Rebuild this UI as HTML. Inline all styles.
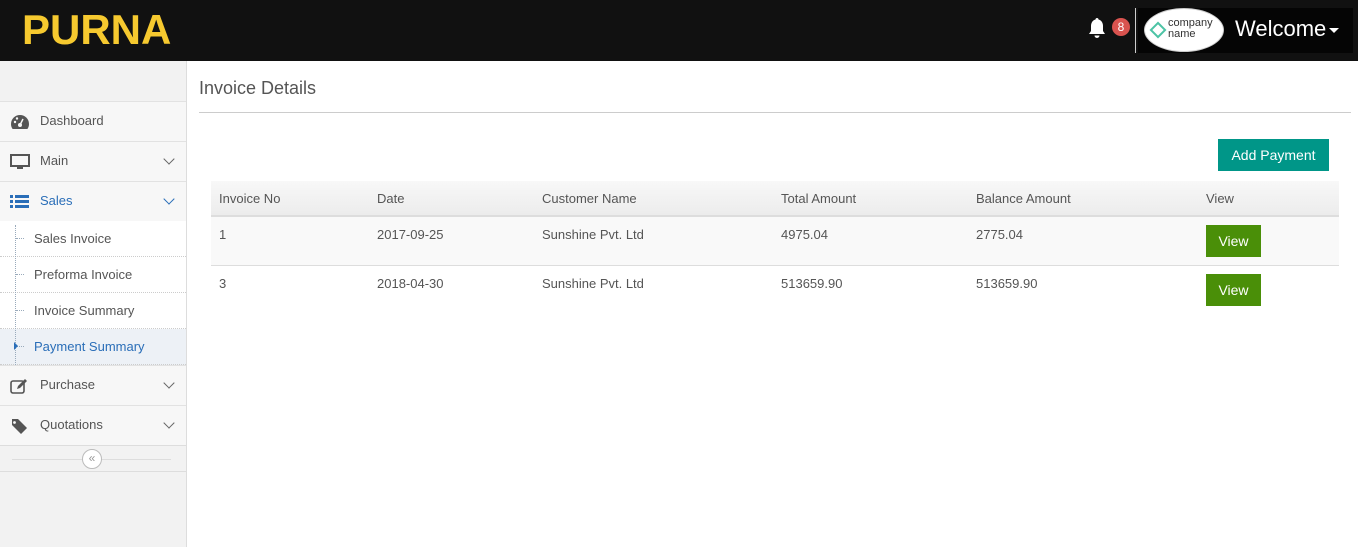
<!DOCTYPE html>
<html><head><style>
*{box-sizing:border-box;margin:0;padding:0}
body{width:1358px;height:558px;overflow:hidden;background:#fff;font-family:"Liberation Sans",sans-serif;font-size:13px;color:#555;position:relative}
.top{position:absolute;left:0;top:0;width:1358px;height:61px;background:#111}
.logo{position:absolute;left:22px;top:8px;font-family:"Liberation Sans",sans-serif;font-weight:bold;font-size:42px;color:#f6c92f;letter-spacing:0px;transform:scaleX(1.0);transform-origin:left;line-height:44px}
.side{position:absolute;left:0;top:61px;width:187px;height:486px;background:#f2f2f2;border-right:1px solid #ddd}
.it{position:absolute;left:0;width:186px;height:40px;border-top:1px solid #e2e2e2;background:#f7f7f7;color:#555;font-size:13px;line-height:38px;padding-left:40px}
.it .chev{position:absolute;right:13px;top:13px;width:8px;height:8px;border-right:1.5px solid #666;border-bottom:1.5px solid #666;transform:rotate(45deg)}
.sub{position:absolute;left:0;width:186px;height:36px;background:#fff;border-bottom:1px dotted #ccc;line-height:35px;padding-left:34px;color:#555;font-size:13px}
.sub:before{content:"";position:absolute;left:16px;top:17px;width:8px;border-top:1px dotted #9ab}
.ic{position:absolute;left:10px;top:12px}
.main h1{position:absolute;left:199px;top:78px;font-weight:normal;font-size:18px;color:#555}
.hr{position:absolute;left:199px;top:112px;width:1152px;border-top:1px solid #ccc}
.btn{position:absolute;background:#009688;color:#fff;font-size:14px;text-align:center}
.view{position:absolute;left:1206px;width:55px;height:32px;background:#4a8f08;color:#fff;font-size:14px;line-height:32px;text-align:center}
.thead{position:absolute;left:211px;top:181px;width:1128px;height:36px;background:linear-gradient(#f8f8f8,#ececec);border-bottom:2px solid #ddd}
.row{position:absolute;left:211px;width:1128px;height:49px;border-bottom:1px solid #ddd}
.c{position:absolute;font-size:13px;color:#555}
</style></head><body>
<div class="top">
<div class="logo">PURNA</div>
<svg style="position:absolute;left:1087px;top:17px" width="20" height="22" viewBox="0 0 20 22"><path d="M10 1c-1 0-1.5.7-1.5 1.5C5.5 3.3 4 6 4 9v5l-2 3h16l-2-3V9c0-3-1.5-5.7-4.5-6.5C11.5 1.7 11 1 10 1z M7.5 18.5a2.5 2.5 0 005 0z" fill="#fff"/></svg>
<div style="position:absolute;left:1112px;top:18px;width:18px;height:18px;border-radius:9px;background:#d9534f;color:#fff;font-size:12px;text-align:center;line-height:18px">8</div>
<div style="position:absolute;left:1135px;top:8px;width:1px;height:45px;background:#ccc"></div>
<div style="position:absolute;left:1138px;top:8px;width:215px;height:45px;background:#050505"></div>
<div style="position:absolute;left:1144px;top:8px;width:80px;height:44px;border-radius:50%;background:#fff;border:1px solid #ccc"></div>
<div style="position:absolute;left:1152px;top:24px;width:12px;height:12px;border:2.5px solid #4cc3a5;transform:rotate(45deg)"></div>
<div style="position:absolute;left:1168px;top:18px;font-size:11px;line-height:11px;color:#333">company<br>name</div>
<div style="position:absolute;left:1235px;top:16px;font-size:22px;color:#fff">Welcome</div>
<div style="position:absolute;left:1329px;top:28px;border-left:5px solid transparent;border-right:5px solid transparent;border-top:5px solid #fff"></div>
</div>
<div class="side">
<div class="it" style="top:40px">Dashboard<svg class="ic" width="20" height="16" viewBox="0 0 20 16"><path d="M10 1A9 9 0 001 10c0 2 .6 3.6 1.6 5h14.8c1-1.4 1.6-3 1.6-5a9 9 0 00-9-9z" fill="#555"/><circle cx="10" cy="11" r="2" fill="#f7f7f7"/><path d="M10 11l3-6" stroke="#f7f7f7" stroke-width="1.5"/><circle cx="5" cy="8" r="1.2" fill="#f7f7f7"/><circle cx="7" cy="4.5" r="1.2" fill="#f7f7f7"/></svg></div>
<div class="it" style="top:80px">Main<svg class="ic" width="20" height="16" viewBox="0 0 20 16"><rect x="1" y="1" width="18" height="11" fill="none" stroke="#555" stroke-width="2"/><rect x="7" y="13" width="6" height="2" fill="#555"/></svg><span class="chev"></span></div>
<div class="it" style="top:120px;color:#2a6eb8">Sales<svg class="ic" width="20" height="16" viewBox="0 0 20 16"><g fill="#2a6eb8"><rect x="0" y="1" width="3" height="3"/><rect x="5" y="1" width="14" height="3"/><rect x="0" y="6" width="3" height="3"/><rect x="5" y="6" width="14" height="3"/><rect x="0" y="11" width="3" height="3"/><rect x="5" y="11" width="14" height="3"/></g></svg><span class="chev" style="border-color:#2a6eb8"></span></div>
<div class="sub" style="top:160px">Sales Invoice</div>
<div class="sub" style="top:196px">Preforma Invoice</div>
<div class="sub" style="top:232px">Invoice Summary</div>
<div class="sub" style="top:268px;background:#edf1f6;color:#2a6eb8">Payment Summary</div>
<div style="position:absolute;left:15px;top:164px;height:140px;border-left:1px dotted #9ab"></div>
<div style="position:absolute;left:14px;top:281px;border-top:4px solid transparent;border-bottom:4px solid transparent;border-left:4px solid #2a6eb8"></div>
<div class="it" style="top:304px">Purchase<svg class="ic" width="20" height="16" viewBox="0 0 20 16"><rect x="1" y="3" width="13" height="12" rx="2" fill="none" stroke="#555" stroke-width="1.6"/><path d="M7 11l1-3 7-7 2 2-7 7z" fill="#555"/></svg><span class="chev"></span></div>
<div class="it" style="top:344px">Quotations<svg class="ic" width="20" height="16" viewBox="0 0 20 16"><path d="M1 1h7l9 9-6 6-9-9V1z" fill="#555"/><circle cx="4.5" cy="4.5" r="1.4" fill="#f7f7f7"/></svg><span class="chev"></span></div>
<div style="position:absolute;left:0;top:384px;width:186px;height:27px;border-top:1px solid #ddd;border-bottom:1px solid #ddd;background:#f2f2f2"></div>
<div style="position:absolute;left:12px;top:398px;width:159px;border-top:1px solid #ddd"></div>
<div style="position:absolute;left:82px;top:388px;width:20px;height:20px;border-radius:50%;border:1px solid #bbb;background:#fff;font-size:12px;line-height:17px;text-align:center;color:#999">«</div>
</div>
<div class="main">
<h1>Invoice Details</h1>
<div class="hr"></div>
<div class="btn" style="left:1218px;top:139px;width:111px;height:32px;line-height:32px">Add Payment</div>
<div class="thead"><span class="c" style="left:8px;top:10px">Invoice No</span><span class="c" style="left:166px;top:10px">Date</span><span class="c" style="left:331px;top:10px">Customer Name</span><span class="c" style="left:570px;top:10px">Total Amount</span><span class="c" style="left:765px;top:10px">Balance Amount</span><span class="c" style="left:995px;top:10px">View</span></div>
<div class="row" style="top:217px;background:#f9f9f9"><span class="c" style="left:8px;top:10px">1</span><span class="c" style="left:166px;top:10px">2017-09-25</span><span class="c" style="left:331px;top:10px">Sunshine Pvt. Ltd</span><span class="c" style="left:570px;top:10px">4975.04</span><span class="c" style="left:765px;top:10px">2775.04</span></div>
<div class="row" style="top:266px;border:none"><span class="c" style="left:8px;top:10px">3</span><span class="c" style="left:166px;top:10px">2018-04-30</span><span class="c" style="left:331px;top:10px">Sunshine Pvt. Ltd</span><span class="c" style="left:570px;top:10px">513659.90</span><span class="c" style="left:765px;top:10px">513659.90</span></div>
<div class="view" style="top:225px">View</div>
<div class="view" style="top:274px">View</div>
</div>
</body></html>
